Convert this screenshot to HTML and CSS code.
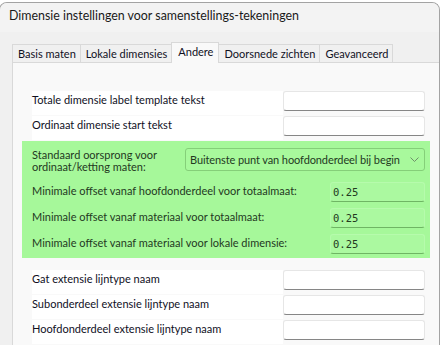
FILE: index.html
```html
<!DOCTYPE html>
<html lang="nl">
<head>
    <meta charset="UTF-8">
    <title>Dimensie instellingen</title>
    <link rel="stylesheet" href="styles.css">
</head>
<body>
    <div class="window">
        <div class="titlebar">Dimensie instellingen voor samenstellings-tekeningen</div>
        <div class="content">
            <ul class="tabs">
                <li class="tab">Basis maten</li>
                <li class="tab">Lokale dimensies</li>
                <li class="tab active">Andere</li>
                <li class="tab">Doorsnede zichten</li>
                <li class="tab">Geavanceerd</li>
            </ul>
            <div class="panel">
                <div class="row">
                    <span class="lbl">Totale dimensie label template tekst</span>
                    <span class="field"></span>
                </div>
                <div class="row">
                    <span class="lbl">Ordinaat dimensie start tekst</span>
                    <span class="field"></span>
                </div>

                <!-- groen gemarkeerde instellingen -->
                <div class="group">
                    <div class="grow">
                        <span class="glbl">Standaard oorsprong voor<br>ordinaat/ketting maten:</span>
                        <div class="combo">
                            <span class="ctext">Buitenste punt van hoofdonderdeel bij begin</span>
                            <svg class="chev" width="9" height="5" viewBox="0 0 9 5"><path d="M0.5 0.5 L4.5 4.5 L8.5 0.5" fill="none" stroke="#6f8f6a" stroke-width="1"/></svg>
                        </div>
                    </div>
                    <div class="grow num">
                        <span class="glbl">Minimale offset vanaf hoofdonderdeel voor totaalmaat:</span>
                        <span class="gfield">0.25</span>
                    </div>
                    <div class="grow num">
                        <span class="glbl">Minimale offset vanaf materiaal voor totaalmaat:</span>
                        <span class="gfield">0.25</span>
                    </div>
                    <div class="grow num">
                        <span class="glbl">Minimale offset vanaf materiaal voor lokale dimensie:</span>
                        <span class="gfield">0.25</span>
                    </div>
                </div>

                <div class="row after">
                    <span class="lbl">Gat extensie lijntype naam</span>
                    <span class="field"></span>
                </div>
                <div class="row wide">
                    <span class="lbl">Subonderdeel extensie lijntype naam</span>
                    <span class="field"></span>
                </div>
                <div class="row wide">
                    <span class="lbl">Hoofdonderdeel extensie lijntype naam</span>
                    <span class="field"></span>
                </div>
            </div>
        </div>
    </div>
</body>
</html>
```

FILE: styles.css
```css
*{
    box-sizing: border-box;
}
body{
    margin: 0;
    background: #ffffff;
    font-family: "Segoe UI", Lato, "Noto Sans", sans-serif;
    font-size: 11px;
    color: #10101e;
    overflow: hidden;
}
.window{
    margin: 2px 0 0 -1px;
    height: 343px;
    border: 1px solid #a3a3a3;
    border-bottom: none;
    border-radius: 8px 8px 0 0;
    background: #f0f0f0;
    overflow: hidden;
}
.titlebar{
    height: 29px;
    padding-left: 9px;
    line-height: 25px;
    font-size: 12.4px;
    color: #1a1a1a;
    background: #f3f3f3;
}
.content{
    padding: 10px 0 0 12px;
    height: 313px;
}
.tabs{
    display: flex;
    align-items: flex-end;
    list-style: none;
    margin: 0;
    padding: 0 0 0 1px;
    height: 20px;
}
.tab{
    height: 18px;
    padding: 0 4px 0 5px;
    margin-left: -1px;
    border: 1px solid #d9d9d9;
    border-bottom: none;
    background: #f0f0f0;
    line-height: 17px;
    white-space: nowrap;
}
.tab.active{
    height: 21px;
    padding: 0 5px 0 6px;
    margin-bottom: -1px;
    background: #f9f9f9;
    position: relative;
    line-height: 17px;
}
.panel{
    height: 283px;
    background: #f9f9f9;
    border-top: 1px solid #d9d9d9;
    border-left: 1px solid #d9d9d9;
    padding: 28px 0 0 19px;
}
.row{
    display: flex;
    height: 24px;
    margin-bottom: 1px;
}
.row.wide{
    margin-top: 1px;
}
.row.after{
    margin-top: 12px;
}
.lbl{
    width: 251px;
    background: #ffffff;
    line-height: 16px;
    padding-top: 1px;
}
.field{
    width: 142px;
    height: 20px;
    background: #ffffff;
    border: 1px solid #e6e6e6;
    border-bottom-color: #868686;
    border-radius: 3px;
}
.group{
    width: 408px;
    margin: 1px 0 0 -10px;
    padding: 7px 5px 4px 10px;
    background: #a6f89a;
    color: #24391f;
}
.grow{
    display: flex;
    justify-content: space-between;
    align-items: flex-start;
}
.grow.num{
    margin-top: 6px;
}
.grow.num:nth-child(2){
    margin-top: 9px;
}
.glbl{
    line-height: 12px;
    padding-top: 1px;
}
.grow.num .glbl{
    line-height: 16px;
}
.combo{
    width: 240px;
    height: 23px;
    display: flex;
    align-items: center;
    padding: 0 5px 0 4px;
    border: 1px solid #85cf79;
    border-radius: 3px;
    background: #a8f99c;
    white-space: nowrap;
}
.ctext{
    flex: 1;
    overflow: hidden;
    letter-spacing: -0.1px;
}
.chev{
    flex: none;
    margin-left: 4px;
}
.gfield{
    width: 95px;
    height: 20px;
    padding: 2px 0 0 2px;
    border: 1px solid #b6fbac;
    border-bottom-color: #6fb564;
    border-radius: 3px;
    background: #abf9a0;
    font-family: "DejaVu Sans Mono", "Liberation Mono", monospace;
    font-size: 10.5px;
    line-height: 14px;
}
```
